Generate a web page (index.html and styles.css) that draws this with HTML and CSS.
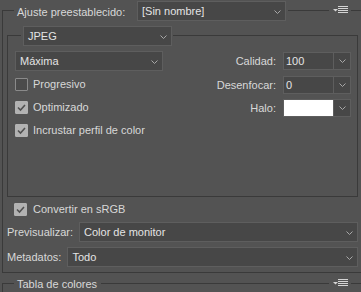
FILE: index.html
```html
<!DOCTYPE html>
<html>
<head>
<meta charset="utf-8">
<link rel="stylesheet" href="styles.css">
</head>
<body>
<div class="hdr">
  <div class="corner"></div>
  <span class="hlabel">Ajuste preestablecido:</span>
  <div class="dd dd-preset"><span>[Sin nombre]</span><svg class="chev" width="7" height="4" viewBox="0 0 7 4"><polyline points="0.5,0.5 3.5,3.5 6.5,0.5"/></svg></div>
  <div class="hline"></div>
  <svg class="menu" width="15" height="8" viewBox="0 0 15 8"><polygon points="0,3 5,3 2.5,5.5"/><rect x="5" y="0" width="10" height="1"/><rect x="5" y="2" width="10" height="1"/><rect x="5" y="4" width="10" height="1"/><rect x="5" y="6" width="10" height="1"/></svg>
  <div class="tail"></div>
</div>
<div class="outer">
  <div class="group">
    <div class="ghdr">
      <div class="gcorner"></div>
      <div class="dd dd-format"><span>JPEG</span><svg class="chev" width="7" height="4" viewBox="0 0 7 4"><polyline points="0.5,0.5 3.5,3.5 6.5,0.5"/></svg></div>
      <div class="gline"></div>
    </div>
    <div class="gbody">
      <div class="col-left">
        <div class="dd dd-quality"><span>Máxima</span><svg class="chev" width="7" height="4" viewBox="0 0 7 4"><polyline points="0.5,0.5 3.5,3.5 6.5,0.5"/></svg></div>
        <div class="checks">
          <div class="check"><span class="box"></span><span>Progresivo</span></div>
          <div class="check"><span class="box on"><svg width="11" height="11" viewBox="0 0 11 11"><polyline points="2,5.5 4.5,8 9,3"/></svg></span><span>Optimizado</span></div>
          <div class="check"><span class="box on"><svg width="11" height="11" viewBox="0 0 11 11"><polyline points="2,5.5 4.5,8 9,3"/></svg></span><span>Incrustar perfil de color</span></div>
        </div>
      </div>
      <div class="col-right">
        <div class="field"><span class="flabel">Calidad:</span><div class="combo"><span class="cval">100</span><span class="carrow"><svg class="chev" width="7" height="4" viewBox="0 0 7 4"><polyline points="0.5,0.5 3.5,3.5 6.5,0.5"/></svg></span></div></div>
        <div class="field f2"><span class="flabel">Desenfocar:</span><div class="combo"><span class="cval">0</span><span class="carrow"><svg class="chev" width="7" height="4" viewBox="0 0 7 4"><polyline points="0.5,0.5 3.5,3.5 6.5,0.5"/></svg></span></div></div>
        <div class="field f3"><span class="flabel">Halo:</span><div class="combo"><span class="cval white"></span><span class="carrow"><svg class="chev" width="7" height="4" viewBox="0 0 7 4"><polyline points="0.5,0.5 3.5,3.5 6.5,0.5"/></svg></span></div></div>
      </div>
    </div>
  </div>
  <div class="check convert"><span class="box on"><svg width="11" height="11" viewBox="0 0 11 11"><polyline points="2,5.5 4.5,8 9,3"/></svg></span><span>Convertir en sRGB</span></div>
  <div class="frow"><span class="rlabel">Previsualizar:</span><div class="dd grow"><span>Color de monitor</span><svg class="chev" width="7" height="4" viewBox="0 0 7 4"><polyline points="0.5,0.5 3.5,3.5 6.5,0.5"/></svg></div></div>
  <div class="frow r2"><span class="rlabel">Metadatos:</span><div class="dd grow"><span>Todo</span><svg class="chev" width="7" height="4" viewBox="0 0 7 4"><polyline points="0.5,0.5 3.5,3.5 6.5,0.5"/></svg></div></div>
</div>
<div class="hdr hdr2">
  <div class="corner c2"></div>
  <span class="hlabel h2">Tabla de colores</span>
  <div class="hline"></div>
  <svg class="menu m2" width="15" height="8" viewBox="0 0 15 8"><polygon points="0,3 5,3 2.5,5.5"/><rect x="5" y="0" width="10" height="1"/><rect x="5" y="2" width="10" height="1"/><rect x="5" y="4" width="10" height="1"/><rect x="5" y="6" width="10" height="1"/></svg>
  <div class="tail"></div>
</div>
</body>
</html>
```

FILE: styles.css
```css
* { box-sizing: border-box; }
body {
  margin: 0;
  width: 361px;
  height: 292px;
  overflow: hidden;
  background: #535353;
  font-family: "Liberation Sans", Arial, sans-serif;
  font-size: 11px;
  line-height: 13px;
  color: #d8d8d8;
}
.hdr { display: flex; height: 21px; }
.corner {
  width: 12px; height: 11px; margin-left: 2px; align-self: flex-end;
  border-top: 1px solid #3a3a3a; border-left: 1px solid #3a3a3a;
}
.hlabel { margin-left: 3px; width: 120px; margin-top: 6px; align-self: flex-start; white-space: nowrap; }
.hline { flex: 1; align-self: flex-start; margin-top: 10px; margin-left: 2px; border-top: 1px solid #3a3a3a; }
.menu { flex: 0 0 15px; margin: 6px 3px 0 4px; }
.menu polygon, .menu rect { fill: #d4d4d4; }
.tail { flex: 0 0 10px; align-self: flex-start; margin-top: 10px; border-top: 1px solid #3a3a3a; }

.dd {
  display: flex; align-items: center; height: 20px;
  background: #474747; border: 1px solid #5e5e5e;
  padding: 1px 4px 0 4px; color: #e4e4e4; white-space: nowrap;
}
.dd .chev { margin-left: auto; }
.chev polyline { fill: none; stroke: #a8a8a8; stroke-width: 1; }
.dd-preset { width: 149px; margin-top: 1px; align-self: flex-start; }

.outer {
  margin-left: 2px;
  border-left: 1px solid #3a3a3a; border-bottom: 1px solid #3a3a3a;
  padding: 5px 3px 5px 0;
}
.group { margin-left: 4px; }
.ghdr { display: flex; height: 20px; }
.gcorner {
  width: 14px; height: 11px; align-self: flex-end;
  border-top: 1px solid #3a3a3a; border-left: 1px solid #3a3a3a;
}
.dd-format { width: 149px; margin-left: 2px; }
.gline {
  flex: 1; height: 11px; align-self: flex-end; margin-left: 1px;
  border-top: 1px solid #3a3a3a; border-right: 1px solid #3a3a3a;
}
.gbody {
  display: flex; justify-content: space-between;
  height: 151px; padding: 5px 6px 0 7px;
  border-left: 1px solid #3a3a3a; border-right: 1px solid #3a3a3a; border-bottom: 1px solid #3a3a3a;
}
.dd-quality { width: 148px; }
.checks { margin-top: 2px; }
.check { display: flex; align-items: center; height: 23px; white-space: nowrap; }
.box {
  width: 13px; height: 13px; margin-right: 5px; flex: 0 0 13px;
  border: 1px solid #8a8a8a; background: #4b4b4b; border-radius: 1px;
  display: flex; align-items: center; justify-content: center;
}
.box.on { background: #b2b2b2; border-color: #b2b2b2; }
.box svg polyline { fill: none; stroke: #505050; stroke-width: 1.6; }

.col-right { padding-top: 1px; }
.field { display: flex; align-items: center; justify-content: flex-end; height: 18px; }
.f2 { margin-top: 6px; }
.f3 { margin-top: 5px; }
.flabel { margin-right: 7px; padding-top: 1px; }
.combo {
  display: flex; width: 68px; height: 18px;
  border: 1px solid #5e5e5e; background: #474747; color: #e4e4e4;
}
.cval { flex: 1; padding: 2px 0 0 2px; }
.cval.white { background: #ffffff; }
.carrow {
  flex: 0 0 17px; border-left: 1px solid #5e5e5e;
  display: flex; align-items: center; justify-content: center;
}

.convert { height: 13px; margin-top: 6px; padding-left: 11px; }
.convert .box { margin-right: 6px; }
.frow { display: flex; align-items: center; margin-top: 6px; padding-left: 4px; }
.r2 { margin-top: 5px; }
.rlabel { margin-right: 6px; padding-top: 1px; white-space: nowrap; }
.grow { flex: 1; }

.hdr2 { height: 20px; }
.c2 { height: 10px; }
.h2 { width: auto; margin-top: 5px; }
.hdr2 .hline { margin-left: 4px; }
.m2 { margin-top: 6px; }
```
